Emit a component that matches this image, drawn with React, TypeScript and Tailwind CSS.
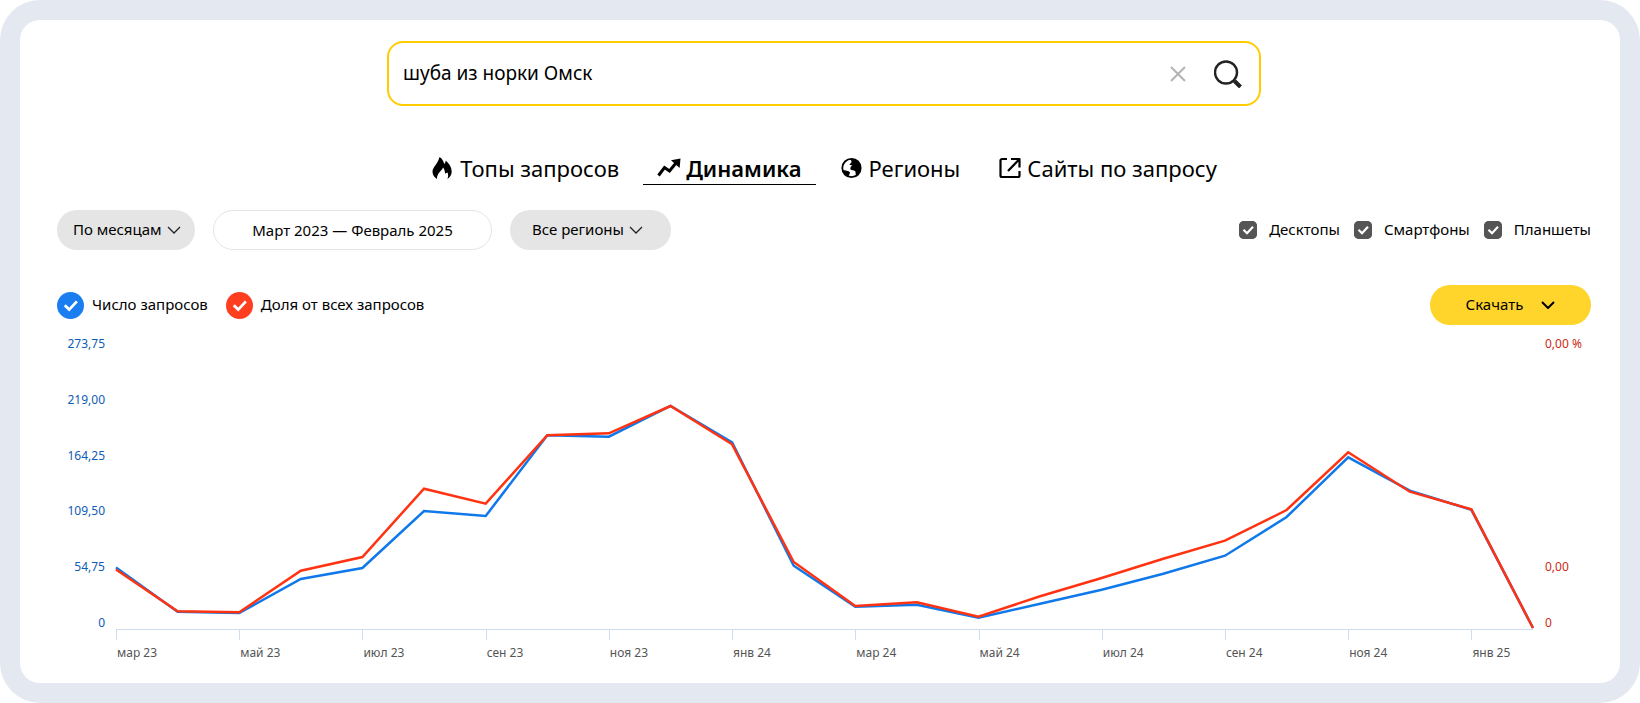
import React, { useState } from 'react';

const BLUE = '#0f78eb';
const RED = '#ff3312';

// Plot area is 1417 x 295 units, the baseline sits at the bottom
const PLOT_WIDTH = 1417;
const PLOT_HEIGHT = 295;

const counts = [
  61.5, 17.3, 16, 50, 61, 118, 113, 193.7, 192.3, 223, 186.7, 63.3, 22.3, 24.3, 11.3, 25.3, 39.3, 55.3, 73.3, 112,
  171.7, 138.3, 119.2, 1,
];
const shares = [
  59.5, 17.7, 16.7, 58.3, 72, 140.3, 125.3, 193.8, 195.7, 223, 184.7, 67, 23, 26.7, 12.3, 32.7, 51, 70.3, 88.3, 119,
  176.7, 137.3, 119.7, 1,
];

const leftLabels = ['273,75', '219,00', '164,25', '109,50', '54,75', '0'];
const rightLabels = ['0,00 %', '', '', '', '0,00', '0'];
const months = [
  'мар 23', 'май 23', 'июл 23', 'сен 23', 'ноя 23', 'янв 24',
  'мар 24', 'май 24', 'июл 24', 'сен 24', 'ноя 24', 'янв 25',
];

const toPoints = (values: number[]) =>
  values
    .map((v, i) => `${((i * PLOT_WIDTH) / (values.length - 1)).toFixed(1)},${(PLOT_HEIGHT - v).toFixed(1)}`)
    .join(' ');

const FlameIcon = () => (
  <svg className="h-6 w-6 shrink-0" viewBox="0 0 24 24" fill="currentColor" aria-hidden="true">
    <path d="M6 23C3 21 1.500 18.500 1.500 15.500 1.500 11.500 7 7.500 8.500 1c2.600 1.500 4 4 4.700 7 .9-1 1.400-2 1.600-3.500 3.400 3 5.900 6.700 5.900 11 0 3.200-1.500 5.700-4.400 7.500 1.200-2.400 1-4.500.2-6.500L14 17.500c0-2.500-.6-4.500-2-6-.8 2.500-3 3.800-4.500 6C6.300 19.500 5.900 21 6 23z" />
  </svg>
);

const TrendIcon = () => (
  <svg className="h-6 w-6 shrink-0" viewBox="0 0 24 24" fill="none" aria-hidden="true">
    <path d="M1.500 19.500 7.500 11.500 12.500 15 19 7" stroke="currentColor" strokeWidth="3" />
    <path d="M14 4.200 23.500 2.500 22.600 12z" fill="currentColor" />
  </svg>
);

const GlobeIcon = () => (
  <svg className="h-6 w-6 shrink-0" viewBox="0 0 24 24" aria-hidden="true">
    <circle cx="11.500" cy="12" r="9.200" fill="none" stroke="currentColor" strokeWidth="1.800" />
    <path
      d="M10.500 3c3-.6 6.500.6 8.500 3.500 2 3.500 2 7 .2 10.200-1.200 1.600-2.200 2.400-3.200 2.800-.6-2.200-.2-3.500-1-4.500-1.200-1-3.500-.2-4.600-1.800-.4-1.800.8-3 1.900-3.700-1.200-.5-2.300.2-2.800-1 .6-1.200 2-1.500 2-2.500 0-1.200-.5-2-1-3z"
      fill="currentColor"
    />
    <path d="M3 14c2 .2 5.500.8 7 2.300-.2 1.800-1.200 2.700-1.500 4.200C6 19.500 4 17 3 14z" fill="currentColor" />
  </svg>
);

const ExternalIcon = () => (
  <svg
    className="h-6 w-6 shrink-0"
    viewBox="0 0 24 24"
    fill="none"
    stroke="currentColor"
    strokeWidth="2.200"
    strokeLinejoin="round"
    aria-hidden="true"
  >
    <path d="M9 3H4a1.500 1.500 0 0 0-1.500 1.500v15A1.500 1.500 0 0 0 4 21h16a1.500 1.500 0 0 0 1.500-1.500V15M13 3h8.500v8.500M21 3.500 10 15" />
  </svg>
);

const ChevronIcon = ({ className }: { className: string }) => (
  <svg className={className} viewBox="0 0 14 8" fill="none" stroke="currentColor" aria-hidden="true">
    <path d="M1 1l6 6 6-6" />
  </svg>
);

const CheckIcon = ({ className }: { className: string }) => (
  <svg className={className} viewBox="0 0 18 18" fill="none" stroke="white" strokeWidth="2.200" aria-hidden="true">
    <path d="M4.500 8.800 8 12.200 14 5.800" />
  </svg>
);

interface PillSelectProps {
  label: string;
  value: string;
  className: string;
  chevronClassName: string;
}

const PillSelect: React.FC<PillSelectProps> = ({ label, value, className, chevronClassName }) => (
  <div className="relative flex items-center">
    <select
      aria-label={label}
      className={`h-10 appearance-none rounded-full bg-[#e5e5e5] pb-0.5 text-[15px] text-black ${className}`}
    >
      <option>{value}</option>
    </select>
    <ChevronIcon className={`pointer-events-none absolute h-2 w-[14px] stroke-[1.3] text-[#222] ${chevronClassName}`} />
  </div>
);

const DeviceCheckbox: React.FC<{ label: string }> = ({ label }) => (
  <label className="flex items-center gap-3">
    <span className="grid">
      <input
        type="checkbox"
        defaultChecked
        className="peer col-start-1 row-start-1 h-[18px] w-[18px] appearance-none rounded-[5px] bg-white ring-1 ring-[#555] ring-inset checked:bg-[#555]"
      />
      <CheckIcon className="pointer-events-none invisible col-start-1 row-start-1 h-[18px] w-[18px] peer-checked:visible" />
    </span>
    <span className="pb-0.5">{label}</span>
  </label>
);

interface LegendToggleProps {
  label: string;
  colorClassName: string;
  checked: boolean;
  onChange: (checked: boolean) => void;
}

const LegendToggle: React.FC<LegendToggleProps> = ({ label, colorClassName, checked, onChange }) => (
  <label className="flex items-center gap-2">
    <span className="grid place-items-center">
      <input
        type="checkbox"
        checked={checked}
        onChange={(e) => onChange(e.target.checked)}
        className={`col-start-1 row-start-1 h-[27px] w-[27px] appearance-none rounded-full ${colorClassName}`}
      />
      {checked && <CheckIcon className="pointer-events-none col-start-1 row-start-1 h-[23px] w-[23px]" />}
    </span>
    <span className="pb-0.5">{label}</span>
  </label>
);

const tabs = [
  { id: 'top', label: 'Топы запросов', Icon: FlameIcon },
  { id: 'dynamics', label: 'Динамика', Icon: TrendIcon },
  { id: 'regions', label: 'Регионы', Icon: GlobeIcon },
  { id: 'sites', label: 'Сайты по запросу', Icon: ExternalIcon },
];

const Chart: React.FC<{ showCount: boolean; showShare: boolean }> = ({ showCount, showShare }) => (
  <div className="mt-[9px] flex items-start text-xs leading-5">
    <div className="flex h-[299px] w-12 flex-col justify-between text-right text-[#0d5cb5]">
      {leftLabels.map((label) => (
        <span key={label}>{label}</span>
      ))}
    </div>
    <div className="mr-3 ml-[11px] min-w-0 flex-1">
      <svg
        className="block h-[295px] w-full overflow-visible"
        viewBox={`0 0 ${PLOT_WIDTH} ${PLOT_HEIGHT}`}
        preserveAspectRatio="none"
        fill="none"
        strokeWidth="2.500"
        role="img"
        aria-label="Динамика"
      >
        {showCount && <polyline points={toPoints(counts)} stroke={BLUE} vectorEffect="non-scaling-stroke" />}
        {showShare && <polyline points={toPoints(shares)} stroke={RED} vectorEffect="non-scaling-stroke" />}
      </svg>
      <div className="grid grid-cols-23 border-t border-[#cfdcee] text-[#555]">
        {months.map((month, i) => (
          <div key={month} className={i === months.length - 1 ? 'col-span-1' : 'col-span-2'}>
            <div className="h-[10px] border-l border-[#cfdcee]" />
            <div className="mt-[3px] pl-px whitespace-nowrap">{month}</div>
          </div>
        ))}
      </div>
    </div>
    <div className="flex h-[299px] w-[46px] flex-col justify-between text-[#cc2a12]">
      {rightLabels.map((label, i) => (
        <span key={i} className="h-5">{label}</span>
      ))}
    </div>
  </div>
);

const App: React.FC = () => {
  const [query, setQuery] = useState('шуба из норки Омск');
  const [activeTab, setActiveTab] = useState('dynamics');
  const [showCount, setShowCount] = useState(true);
  const [showShare, setShowShare] = useState(true);

  return (
    <div className="min-h-screen rounded-[40px] bg-[#e4e9f1] p-5 font-['Noto_Sans',sans-serif] text-[15px] text-black">
      <main className="rounded-[20px] bg-white pt-[21px] pr-[29px] pb-5 pl-[37px]">
        {/* Search */}
        <form
          className="mx-auto flex h-[65px] w-full max-w-[874px] items-center rounded-2xl border-2 border-[#ffcc00] pr-[17px] pl-[14px]"
          onSubmit={(e) => e.preventDefault()}
        >
          <input
            type="text"
            aria-label="Запрос"
            value={query}
            onChange={(e) => setQuery(e.target.value)}
            className="min-w-0 flex-1 text-[19px] outline-none"
          />
          <button type="button" aria-label="Очистить" className="p-2 text-[#b3b3b3]" onClick={() => setQuery('')}>
            <svg className="h-4 w-4" viewBox="0 0 16 16" fill="none" stroke="currentColor" strokeWidth="2">
              <path d="M1 1l14 14M15 1 1 15" />
            </svg>
          </button>
          <button type="submit" aria-label="Найти" className="ml-5 text-[#222]">
            <svg className="h-7 w-7" viewBox="0 0 28 28" fill="none" stroke="currentColor">
              <circle cx="12" cy="12.500" r="11" strokeWidth="2.400" />
              <path d="M20.500 21 26.500 27" strokeWidth="4" />
            </svg>
          </button>
        </form>

        {/* Tabs */}
        <nav className="mt-[46px] flex justify-center gap-[10px]">
          {tabs.map(({ id, label, Icon }) => (
            <button
              key={id}
              type="button"
              onClick={() => setActiveTab(id)}
              className={`flex h-[33px] items-center gap-[5px] border-b px-[14px] text-[22px] leading-8 ${
                activeTab === id ? 'border-black font-semibold' : 'border-transparent'
              }`}
            >
              <Icon />
              {label}
            </button>
          ))}
        </nav>

        {/* Filters */}
        <div className="mt-[25px] flex items-center">
          <PillSelect label="Период" value="По месяцам" className="w-[138px] pl-4" chevronClassName="right-[14px]" />
          <button type="button" className="ml-[18px] h-10 w-[279px] rounded-full border border-[#e5e5e5]">
            Март 2023 — Февраль 2025
          </button>
          <div className="ml-[18px]">
            <PillSelect label="Регион" value="Все регионы" className="w-[161px] pl-[22px]" chevronClassName="right-7" />
          </div>
          <div className="ml-auto flex items-center gap-[14px]">
            <DeviceCheckbox label="Десктопы" />
            <DeviceCheckbox label="Смартфоны" />
            <DeviceCheckbox label="Планшеты" />
          </div>
        </div>

        {/* Legend */}
        <div className="mt-[35px] flex items-center gap-[18px]">
          <LegendToggle
            label="Число запросов"
            colorClassName="bg-[#1a7ef0]"
            checked={showCount}
            onChange={setShowCount}
          />
          <LegendToggle
            label="Доля от всех запросов"
            colorClassName="bg-[#ff3d1f]"
            checked={showShare}
            onChange={setShowShare}
          />
          <button
            type="button"
            className="ml-auto flex h-10 w-[161px] items-center justify-center gap-[18px] rounded-full bg-[#ffd42b] pb-px"
          >
            Скачать
            <ChevronIcon className="h-2 w-[14px] stroke-2" />
          </button>
        </div>

        <Chart showCount={showCount} showShare={showShare} />
      </main>
    </div>
  );
};

export default App;
